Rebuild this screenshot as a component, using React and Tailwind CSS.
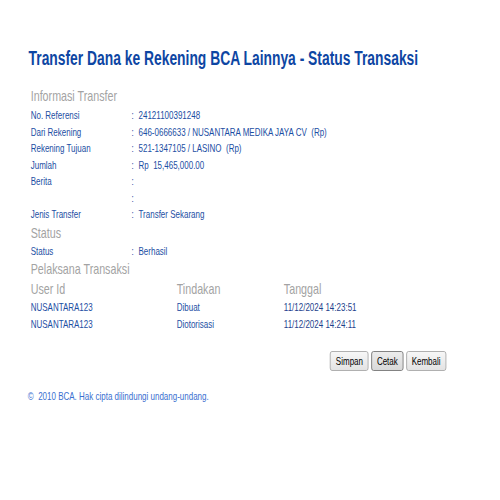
const rows = [
  ["No. Referensi", "24121100391248"],
  ["Dari Rekening", "646-0666633 / NUSANTARA MEDIKA JAYA CV\u00a0\u00a0(Rp)"],
  ["Rekening Tujuan", "521-1347105 / LASINO\u00a0\u00a0(Rp)"],
  ["Jumlah", "Rp\u00a0\u00a015,465,000.00"],
  ["Berita", ""],
  ["", ""],
  ["Jenis Transfer", "Transfer Sekarang"],
];

const pelaksana = [
  ["NUSANTARA123", "Dibuat", "11/12/2024 14:23:51"],
  ["NUSANTARA123", "Diotorisasi", "11/12/2024 14:24:11"],
];

function Row({ label, value }) {
  return (
    <div className="grid grid-cols-[141px_10px_1fr] h-[16.5px] leading-[16.5px] text-[11.2px] text-[#1b4ea3]">
      <div>{label}</div>
      <div>:</div>
      <div>{value}</div>
    </div>
  );
}

function Header({ children }) {
  return <div className="h-[20px] leading-[20px] text-[15px] text-[#a3a3a3]">{children}</div>;
}

function Btn({ children, active }) {
  return (
    <button
      className={
        active
          ? "h-[20px] px-[7px] text-[11.2px] leading-[18px] text-black rounded-[3px] border border-[#6e6e6e] bg-gradient-to-b from-[#ececec] to-[#d9d9d9]"
          : "h-[20px] px-[7px] text-[11.2px] leading-[18px] text-black rounded-[3px] border border-[#a3a3a3] bg-gradient-to-b from-[#f7f7f7] to-[#e3e3e3]"
      }
    >
      {children}
    </button>
  );
}

export default function App() {
  return (
    <div className="w-[500px] h-[500px] overflow-hidden bg-white font-['Liberation_Sans',Arial,sans-serif]">
      <div className="w-[700px] origin-top-left scale-x-[0.714] pt-[45.5px]">
        <h1 className="pl-[40px] h-[24px] leading-[24px] text-[19.4px] font-bold text-[#0e46a3]">
          Transfer Dana ke Rekening BCA Lainnya - Status Transaksi
        </h1>
        <div className="pl-[43px] mt-[16.5px]">
          <Header>Informasi Transfer</Header>
          <div className="mt-[1.25px]">
            {rows.map(([l, v], i) => (
              <Row key={i} label={l} value={v} />
            ))}
          </div>
          <Header>Status</Header>
          <Row label="Status" value="Berhasil" />
          <Header>Pelaksana Transaksi</Header>
          <div className="grid grid-cols-[204.5px_150px_1fr] h-[20px] leading-[20px] text-[15px] text-[#a3a3a3]">
            <div>User Id</div>
            <div>Tindakan</div>
            <div>Tanggal</div>
          </div>
          {pelaksana.map(([u, t, d], i) => (
            <div key={i} className="grid grid-cols-[204.5px_150px_1fr] h-[16.5px] leading-[16.5px] text-[11.2px] text-[#1b4ea3]">
              <div>{u}</div>
              <div>{t}</div>
              <div className="text-[#1d3f8c]">{d}</div>
            </div>
          ))}
        </div>
        <div className="w-[625px] flex justify-end gap-[3.5px] mt-[18.75px]">
          <Btn>Simpan</Btn>
          <Btn active>Cetak</Btn>
          <Btn>Kembali</Btn>
        </div>
        <div className="pl-[39px] mt-[17px] h-[16px] leading-[16px] text-[11.2px] text-[#3a6fd0]">
          ©&nbsp;&nbsp;2010 BCA. Hak cipta dilindungi undang-undang.
        </div>
      </div>
    </div>
  );
}
